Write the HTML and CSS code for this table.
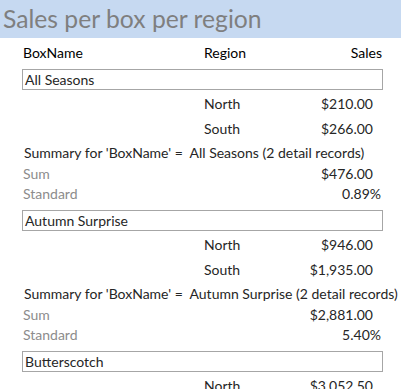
FILE: index.html
```html
<!DOCTYPE html>
<html>
<head>
<meta charset="utf-8">
<link rel="stylesheet" href="styles.css">
</head>
<body>
<div class="band"><div class="title">Sales per box per region</div></div>
<div class="report">
  <div class="colhead">
    <span class="c-box">BoxName</span>
    <span class="c-region">Region</span>
    <span class="c-sales">Sales</span>
  </div>

  <div class="group">
    <div class="gname">All Seasons</div>
    <div class="detail"><span class="region">North</span><span class="amt">$210.00</span></div>
    <div class="detail"><span class="region">South</span><span class="amt">$266.00</span></div>
    <div class="summary">Summary for 'BoxName' =&nbsp; All Seasons (2 detail records)</div>
    <div class="stat"><span class="lbl">Sum</span><span class="sumval">$476.00</span></div>
    <div class="stat"><span class="lbl">Standard</span><span class="stdval">0.89%</span></div>
  </div>

  <div class="group">
    <div class="gname">Autumn Surprise</div>
    <div class="detail"><span class="region">North</span><span class="amt">$946.00</span></div>
    <div class="detail"><span class="region">South</span><span class="amt">$1,935.00</span></div>
    <div class="summary">Summary for 'BoxName' =&nbsp; Autumn Surprise (2 detail records)</div>
    <div class="stat"><span class="lbl">Sum</span><span class="sumval">$2,881.00</span></div>
    <div class="stat"><span class="lbl">Standard</span><span class="stdval">5.40%</span></div>
  </div>

  <div class="group last">
    <div class="gname">Butterscotch</div>
    <div class="detail"><span class="region">North</span><span class="amt">$3,052.50</span></div>
  </div>
</div>
</body>
</html>
```
FILE: styles.css
```css
html, body {
  margin: 0;
  padding: 0;
  background: #ffffff;
  overflow: hidden;
}
body {
  font-family: Lato, "Liberation Sans", sans-serif;
  font-size: 14px;
  color: #262626;
  width: 401px;
  height: 389px;
}
.band {
  height: 38px;
  background: #c6d9f1;
  display: flex;
  align-items: center;
  padding-left: 3px;
}
.title {
  font-size: 24.7px;
  color: #7f7f7f;
  line-height: 30px;
  white-space: nowrap;
}
.report {
  margin-left: 22px;
  width: 361px;
}
.colhead {
  margin-top: 4px;
  height: 20px;
  display: grid;
  grid-template-columns: 181px 1fr auto;
  align-items: center;
  padding-left: 1px;
  padding-right: 1px;
  color: #000000;
  margin-bottom: 7px;
}
.c-sales { text-align: right; }
.group {
  height: 141px;
}
.group.last {
  height: 46px;
  overflow: hidden;
}
.gname {
  box-sizing: border-box;
  height: 21px;
  border: 1px solid #a6a6a6;
  padding-left: 2px;
  line-height: 19px;
  white-space: nowrap;
}
.detail {
  height: 25px;
  display: grid;
  grid-template-columns: 182px 1fr 10px;
  align-items: center;
  padding-top: 1px;
  box-sizing: border-box;
}
.detail .region { grid-column: 2; grid-row: 1; }
.detail .amt { grid-column: 2; grid-row: 1; text-align: right; }
.summary {
  margin-top: 3px;
  height: 20px;
  line-height: 20px;
  padding-left: 2px;
  white-space: nowrap;
}
.stat {
  height: 20px;
  display: flex;
  align-items: center;
  justify-content: space-between;
  padding-left: 1px;
}
.lbl { color: #8c8c8c; }
.sumval { margin-right: 10px; }
.stdval { margin-right: 2px; }
```
